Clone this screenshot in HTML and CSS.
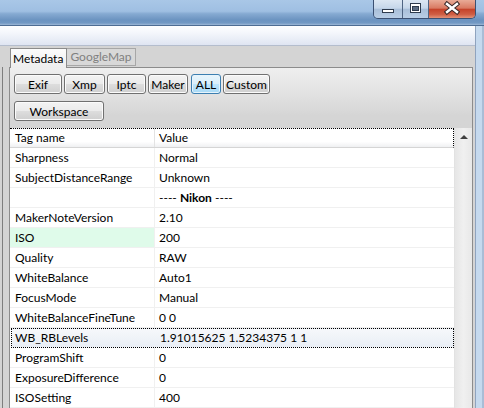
FILE: index.html
```html
<!DOCTYPE html>
<html lang="en">

<head>
    <meta charset="utf-8">
    <title>Metadata</title>
    <link rel="stylesheet" href="styles.css">
</head>

<body>
    <div class="window">
        <div class="titlebar">
            <div class="caption">
                <span class="cap min">
                    <svg width="28" height="17" viewBox="0 0 28 17"><rect x="8.5" y="9.5" width="11" height="3" fill="#fff" stroke="#2e3b4d"/></svg>
                </span>
                <span class="cap max">
                    <svg width="25" height="17" viewBox="0 0 25 17"><rect x="7.5" y="3.5" width="10" height="9" fill="#fff" stroke="#2e3b4d"/><rect x="9.5" y="6.5" width="6" height="4" fill="#5a6b82" stroke="#2e3b4d"/></svg>
                </span>
                <span class="cap close">
                    <svg width="46" height="17" viewBox="0 0 46 17"><path d="M18 4 L28 12 M28 4 L18 12" stroke="#3b2a2a" stroke-width="4.5" stroke-linecap="square"/><path d="M18 4 L28 12 M28 4 L18 12" stroke="#fff" stroke-width="2.4" stroke-linecap="square"/></svg>
                </span>
            </div>
        </div>
        <div class="frame">
            <div class="client">
                <div class="menubar"></div>
                <div class="area">
                    <div class="leftpane"></div>
                    <div class="tabs">
                        <div class="tabbar">
                            <span class="tab active">Metadata</span>
                            <span class="tab">GoogleMap</span>
                        </div>
                        <div class="pane">
                            <div class="btnrow">
                                <button class="btn w-exif">Exif</button>
                                <button class="btn w-xmp">Xmp</button>
                                <button class="btn w-iptc">Iptc</button>
                                <button class="btn w-maker">Maker</button>
                                <button class="btn w-all on">ALL</button>
                                <button class="btn w-custom">Custom</button>
                            </div>
                            <div class="btnrow second">
                                <button class="btn w-ws">Workspace</button>
                            </div>
                            <div class="grid">
                                <div class="table">
                                    <div class="row head">
                                        <span class="tag">Tag name</span>
                                        <span class="val">Value</span>
                                    </div>
                                    <div class="row"><span class="tag">Sharpness</span><span class="val">Normal</span></div>
                                    <div class="row"><span class="tag">SubjectDistanceRange</span><span class="val">Unknown</span></div>
                                    <div class="row"><span class="tag"></span><span class="val">---- <b>Nikon</b> ----</span></div>
                                    <div class="row"><span class="tag">MakerNoteVersion</span><span class="val">2.10</span></div>
                                    <div class="row"><span class="tag mint">ISO</span><span class="val">200</span></div>
                                    <div class="row"><span class="tag">Quality</span><span class="val">RAW</span></div>
                                    <div class="row"><span class="tag">WhiteBalance</span><span class="val">Auto1</span></div>
                                    <div class="row"><span class="tag">FocusMode</span><span class="val">Manual</span></div>
                                    <div class="row"><span class="tag">WhiteBalanceFineTune</span><span class="val">0 0</span></div>
                                    <div class="row current"><span class="tag">WB_RBLevels</span><span class="val">1.91015625 1.5234375 1 1</span></div>
                                    <div class="row"><span class="tag">ProgramShift</span><span class="val">0</span></div>
                                    <div class="row"><span class="tag">ExposureDifference</span><span class="val">0</span></div>
                                    <div class="row"><span class="tag">ISOSetting</span><span class="val">400</span></div>
                                </div>
                                <div class="scroll">
                                    <span class="arrow"></span>
                                </div>
                            </div>
                        </div>
                    </div>
                </div>
            </div>
            <div class="edge"></div>
        </div>
    </div>
</body>

</html>
```

FILE: styles.css
```css
*,
body * {
    box-sizing: border-box;
}

body {
    margin: 0;
    padding: 0;
    width: 484px;
    height: 408px;
    overflow: hidden;
    font-family: Lato, "Noto Sans", sans-serif;
    font-size: 12px;
    color: #000;
}

.window {
    display: flex;
    flex-direction: column;
    height: 408px;
}

/* title bar */
.titlebar {
    flex-shrink: 0;
    height: 26px;
    display: flex;
    justify-content: flex-end;
    padding-right: 8px;
    background: linear-gradient(to bottom, #a9c7e7 0, #9fbfe2 45%, #86aad2 55%, #6b93c0 80%, #7298c3 92%, #9db8d6 100%);
    border-bottom: 1px solid #4d6c93;
}

.caption {
    display: flex;
    height: 19px;
    border: 1px solid #3b5072;
    border-top: none;
    border-radius: 0 0 5px 5px;
    overflow: hidden;
}

.cap {
    display: block;
    height: 18px;
}

.cap svg {
    display: block;
}

.min,
.max {
    background: linear-gradient(to bottom, #dce7f3 0, #c6d7ea 45%, #a9bfd9 52%, #b9cee6 100%);
    border-right: 1px solid #4f6583;
}

.min {
    width: 29px;
}

.max {
    width: 26px;
}

.close {
    width: 46px;
    background: linear-gradient(to bottom, #e9ab97 0, #d97a62 45%, #c5432a 52%, #cf5e44 80%, #e39278 100%);
}

/* body of the window */
.frame {
    display: flex;
    flex: 1;
    min-height: 0;
}

.client {
    flex: 1;
    display: flex;
    flex-direction: column;
    min-height: 0;
}

.edge {
    width: 9px;
    background: #c5d9ee;
    border-left: 1px solid #8fa3be;
    border-right: 2px solid #a9bdd6;
}

.menubar {
    flex-shrink: 0;
    height: 20px;
    background: linear-gradient(to bottom, #fdfdfe 0, #f6f8fc 30%, #dfe5f2 100%);
    border-bottom: 1px solid #b4bdcd;
}

.area {
    flex: 1;
    min-height: 0;
    overflow: hidden;
    display: flex;
    background: #d4d4d4;
}

.leftpane {
    width: 3px;
    margin-top: 21px;
    border-right: 1px solid #7e7e7e;
}

.tabs {
    width: 464px;
    margin-left: 6px;
    display: flex;
    flex-direction: column;
}

.tabbar {
    flex-shrink: 0;
    height: 21px;
    display: flex;
    align-items: flex-start;
    padding: 2px 0 0 1px;
}

.tab {
    height: 18px;
    line-height: 16px;
    padding: 0 3px;
    border: 1px solid #a7a7a7;
    border-left: none;
    background: #d8d8d8;
    color: #808080;
}

.tab.active {
    height: 20px;
    padding: 0 3px 0 2px;
    border: 1px solid #8b8b8b;
    border-bottom: none;
    background: linear-gradient(to bottom, #fcfcfc, #ededed);
    color: #000;
    line-height: 19px;
    position: relative;
    z-index: 1;
}

.pane {
    flex: 1;
    min-height: 0;
    border: 1px solid #8c8c8c;
    border-bottom: none;
    padding-top: 6px;
    background: linear-gradient(to bottom, #efefef 0, #e4e4e4 22px, #d5d5d5 48px, #d3d3d3 100%);
    display: flex;
    flex-direction: column;
}

.btnrow {
    flex-shrink: 0;
    display: flex;
    gap: 2px;
    padding-left: 4px;
}

.btnrow.second {
    margin-top: 7px;
}

.btn {
    height: 20px;
    padding: 0;
    font-family: inherit;
    font-size: 12px;
    color: #000;
    border: 1px solid #707070;
    border-radius: 3px;
    background: linear-gradient(to bottom, #f3f3f3 0, #ebebeb 48%, #dddddd 52%, #cfcfcf 100%);
    box-shadow: inset 0 0 0 1px #fbfbfb;
}

.btn.on {
    border-color: #3c7fb1;
    background: linear-gradient(to bottom, #e8f5fc 0, #d9effb 48%, #bee6fd 52%, #a7d9f5 100%);
    box-shadow: inset 0 0 0 1px #e6f4fc;
}

.w-exif { width: 48px; }
.w-xmp { width: 41px; }
.w-iptc { width: 39px; }
.w-maker { width: 40px; margin-right: 1px; }
.w-all { width: 30px; }
.w-custom { width: 47px; }
.w-ws { width: 90px; }

/* table */
.grid {
    flex: 1;
    min-height: 0;
    display: flex;
    margin-top: 7px;
    overflow: hidden;
}

.table {
    width: 444px;
    background: #fff;
}

.row {
    display: flex;
    height: 20px;
    line-height: 19px;
    border-bottom: 1px solid #f0f0f0;
}

.row span {
    white-space: nowrap;
}

.tag {
    width: 145px;
    padding-left: 5px;
    border-right: 1px solid #f0f0f0;
}

.val {
    flex: 1;
    padding-left: 4px;
}

.row.head {
    border-top: 1px dotted #000;
    border-right: 1px dotted #000;
    border-bottom: 1px solid #d5d5d5;
    line-height: 17px;
    background: linear-gradient(to bottom, #fff 0, #fff 70%, #eff0f2 100%);
}

.row.head .tag {
    border-right: 1px solid #e3e3e3;
}

.tag.mint {
    background: #dffbea;
}

.row.current {
    width: 443px;
    margin-left: 1px;
    border: 1px dotted #000;
    background: linear-gradient(to bottom, #f6f8fb 0, #e9eef5 100%);
    line-height: 17px;
}

.row.current .tag {
    width: 144px;
    padding-left: 3px;
    border-right: none;
}

.row.current .val {
    padding-left: 4px;
}

.scroll {
    width: 18px;
    background: linear-gradient(to right, #e6e6e6, #f0f0f0 50%, #e8e8e8);
    border-left: 1px solid #e2e2e2;
    position: relative;
}

.arrow {
    position: absolute;
    left: 5px;
    top: 7px;
    width: 0;
    height: 0;
    border-left: 4px solid transparent;
    border-right: 4px solid transparent;
    border-bottom: 4px solid #404040;
}
```
